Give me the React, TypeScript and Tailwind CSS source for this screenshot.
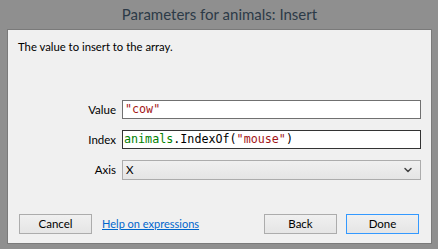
import { ChevronDown } from "lucide-react";

// ─── Dialog: Parameters for animals: Insert ──────────────────────────────────

const ui = "font-['Lato','Liberation_Sans',sans-serif]";
const code = "font-['DejaVu_Sans_Mono','Liberation_Mono',monospace]";

function Button({ label, primary = false }: { label: string; primary?: boolean }) {
  return (
    <button
      className={`h-[20px] w-[73px] border bg-gradient-to-b from-[#f0f0f0] to-[#e5e5e5] text-[11.5px] leading-none text-[#000] ${
        primary ? "border-[#3399ff]" : "border-[#acacac]"
      }`}
    >
      {label}
    </button>
  );
}

export default function App() {
  return (
    <div className={`h-[249px] w-[438px] bg-[#8f8f8f] px-[6px] pb-[5px] pl-[7px] flex flex-col ${ui}`}>
      {/* Title bar */}
      <div className="h-[29px] flex items-center justify-center text-[15px] text-[#2c3a47] pb-[1px]">
        Parameters for animals: Insert
      </div>

      {/* Client area */}
      <div className="flex-1 flex flex-col border border-[#7a7a7a] bg-[#f0f0f0] px-[10px] pb-[9px]">
        <p className="mt-[10px] h-[14px] text-[11.3px] leading-[14px] text-[#000]">
          The value to insert to the array.
        </p>

        <div className="mt-[46px] grid grid-cols-[98px_1fr] gap-x-[6px] gap-y-[11px] items-center text-[11.5px] text-[#000]">
          <span className="text-right">Value</span>
          <div className="h-[19px] border border-[#707070] bg-white px-[2px] flex items-center">
            <span className={`${code} text-[11.7px] text-[#a31515]`}>"cow"</span>
          </div>

          <span className="text-right">Index</span>
          <div className="h-[19px] border border-[#333] bg-white px-[1px] flex items-center">
            <span className={`${code} text-[11.7px] whitespace-pre`}>
              <span className="text-[#008000]">animals</span>
              <span className="text-[#000]">.IndexOf(</span>
              <span className="text-[#a31515]">"mouse"</span>
              <span className="text-[#000]">)</span>
            </span>
          </div>

          <span className="text-right">Axis</span>
          <div className="h-[20px] border border-[#acacac] bg-gradient-to-b from-[#f0f0f0] to-[#e5e5e5] pl-[3px] pr-[6px] flex items-center justify-between">
            <span className="text-[#000]">X</span>
            <ChevronDown className="h-[12px] w-[12px] text-[#444]" strokeWidth={3} />
          </div>
        </div>

        <div className="flex-1" />

        {/* Footer */}
        <div className="flex items-center pl-[1px] pr-[2px]">
          <Button label="Cancel" />
          <a href="#" className="ml-[10px] text-[11px] text-[#0066cc] underline">
            Help on expressions
          </a>
          <div className="flex-1" />
          <Button label="Back" />
          <div className="w-[9px]" />
          <Button label="Done" primary />
        </div>
      </div>
    </div>
  );
}
